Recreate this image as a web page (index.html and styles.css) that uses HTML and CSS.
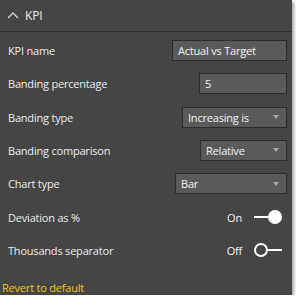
FILE: index.html
```html
<!DOCTYPE html>
<html>
<head>
<meta charset="utf-8">
<link rel="stylesheet" href="styles.css">
</head>
<body>
<div class="panel">
  <div class="header">
    <svg class="chev" width="12" height="8" viewBox="0 0 12 8"><polyline points="1,7 6,2 11,7" fill="none" stroke="#d0d0d0" stroke-width="1.3"/></svg>
    <span class="title">KPI</span>
  </div>
  <div class="rows">
    <div class="row"><span class="label">KPI name</span><div class="field w-name">Actual vs Target</div></div>
    <div class="row"><span class="label">Banding percentage</span><div class="field w-pct">5</div></div>
    <div class="row"><span class="label">Banding type</span><div class="field select w-type"><span>Increasing is</span><i class="arrow"></i></div></div>
    <div class="row"><span class="label">Banding comparison</span><div class="field select w-comp"><span>Relative</span><i class="arrow"></i></div></div>
    <div class="row"><span class="label">Chart type</span><div class="field select w-chart"><span>Bar</span><i class="arrow"></i></div></div>
    <div class="row"><span class="label">Deviation as %</span><div class="toggle-wrap"><span class="state">On</span><span class="toggle on"><i class="track"></i><i class="knob"></i></span></div></div>
    <div class="row"><span class="label">Thousands separator</span><div class="toggle-wrap"><span class="state">Off</span><span class="toggle off"><i class="knob"></i><i class="track"></i></span></div></div>
  </div>
  <div class="revert">Revert to default</div>
</div>
</body>
</html>
```
FILE: styles.css
```css
html, body {
  margin: 0;
  padding: 0;
  background: #ffffff;
}
.panel {
  width: 292px;
  height: 295px;
  background: #454545;
  box-shadow: 2px 2px 3px rgba(0,0,0,0.35);
  font-family: "Open Sans", "Noto Sans", sans-serif;
  font-size: 11px;
  letter-spacing: -0.2px;
  color: #e6e6e6;
  display: flex;
  flex-direction: column;
}
.header {
  border-bottom: 1px solid #2f2f2f;
  display: flex;
  align-items: center;
  padding-left: 7px;
  gap: 6px;
  box-sizing: border-box;
  height: 33px;
}
.chev { display: block; margin-top: -1px; }
.title {
  font-size: 12px;
  color: #ececec;
  margin-top: -1px;
}
.rows {
  padding-top: 1.4px;
  display: flex;
  flex-direction: column;
}
.row {
  height: 33.33px;
  display: flex;
  align-items: center;
  justify-content: space-between;
  padding: 0 5px 0 8px;
}
.label { color: #ececec; }
.field {
  height: 21px;
  box-sizing: border-box;
  background: #5a5a5a;
  border: 1px solid #2c2c2c;
  display: flex;
  align-items: center;
  padding-left: 5px;
  color: #f2f2f2;
}
.select { justify-content: space-between; padding-right: 7px; }
.arrow {
  width: 0;
  height: 0;
  border-left: 3.5px solid transparent;
  border-right: 3.5px solid transparent;
  border-top: 4px solid #a8a8a8;
}
.w-name { width: 115px; }
.w-pct { width: 88px; }
.w-type { width: 105px; }
.w-comp { width: 87px; }
.w-chart { width: 112px; }
.toggle-wrap {
  display: flex;
  align-items: center;
  gap: 12px;
  padding-right: 5px;
}
.state { color: #f2f2f2; }
.toggle {
  display: flex;
  align-items: center;
  width: 28px;
}
.track {
  flex: 1;
  height: 2px;
  background: #ffffff;
}
.on .knob {
  width: 14px;
  height: 14px;
  border-radius: 50%;
  background: #ffffff;
}
.off .knob {
  width: 14px;
  height: 14px;
  box-sizing: border-box;
  border-radius: 50%;
  border: 2px solid #ffffff;
}
.revert {
  margin-top: 13px;
  padding-left: 2px;
  color: #f2c811;
  font-size: 11px;
}
```
